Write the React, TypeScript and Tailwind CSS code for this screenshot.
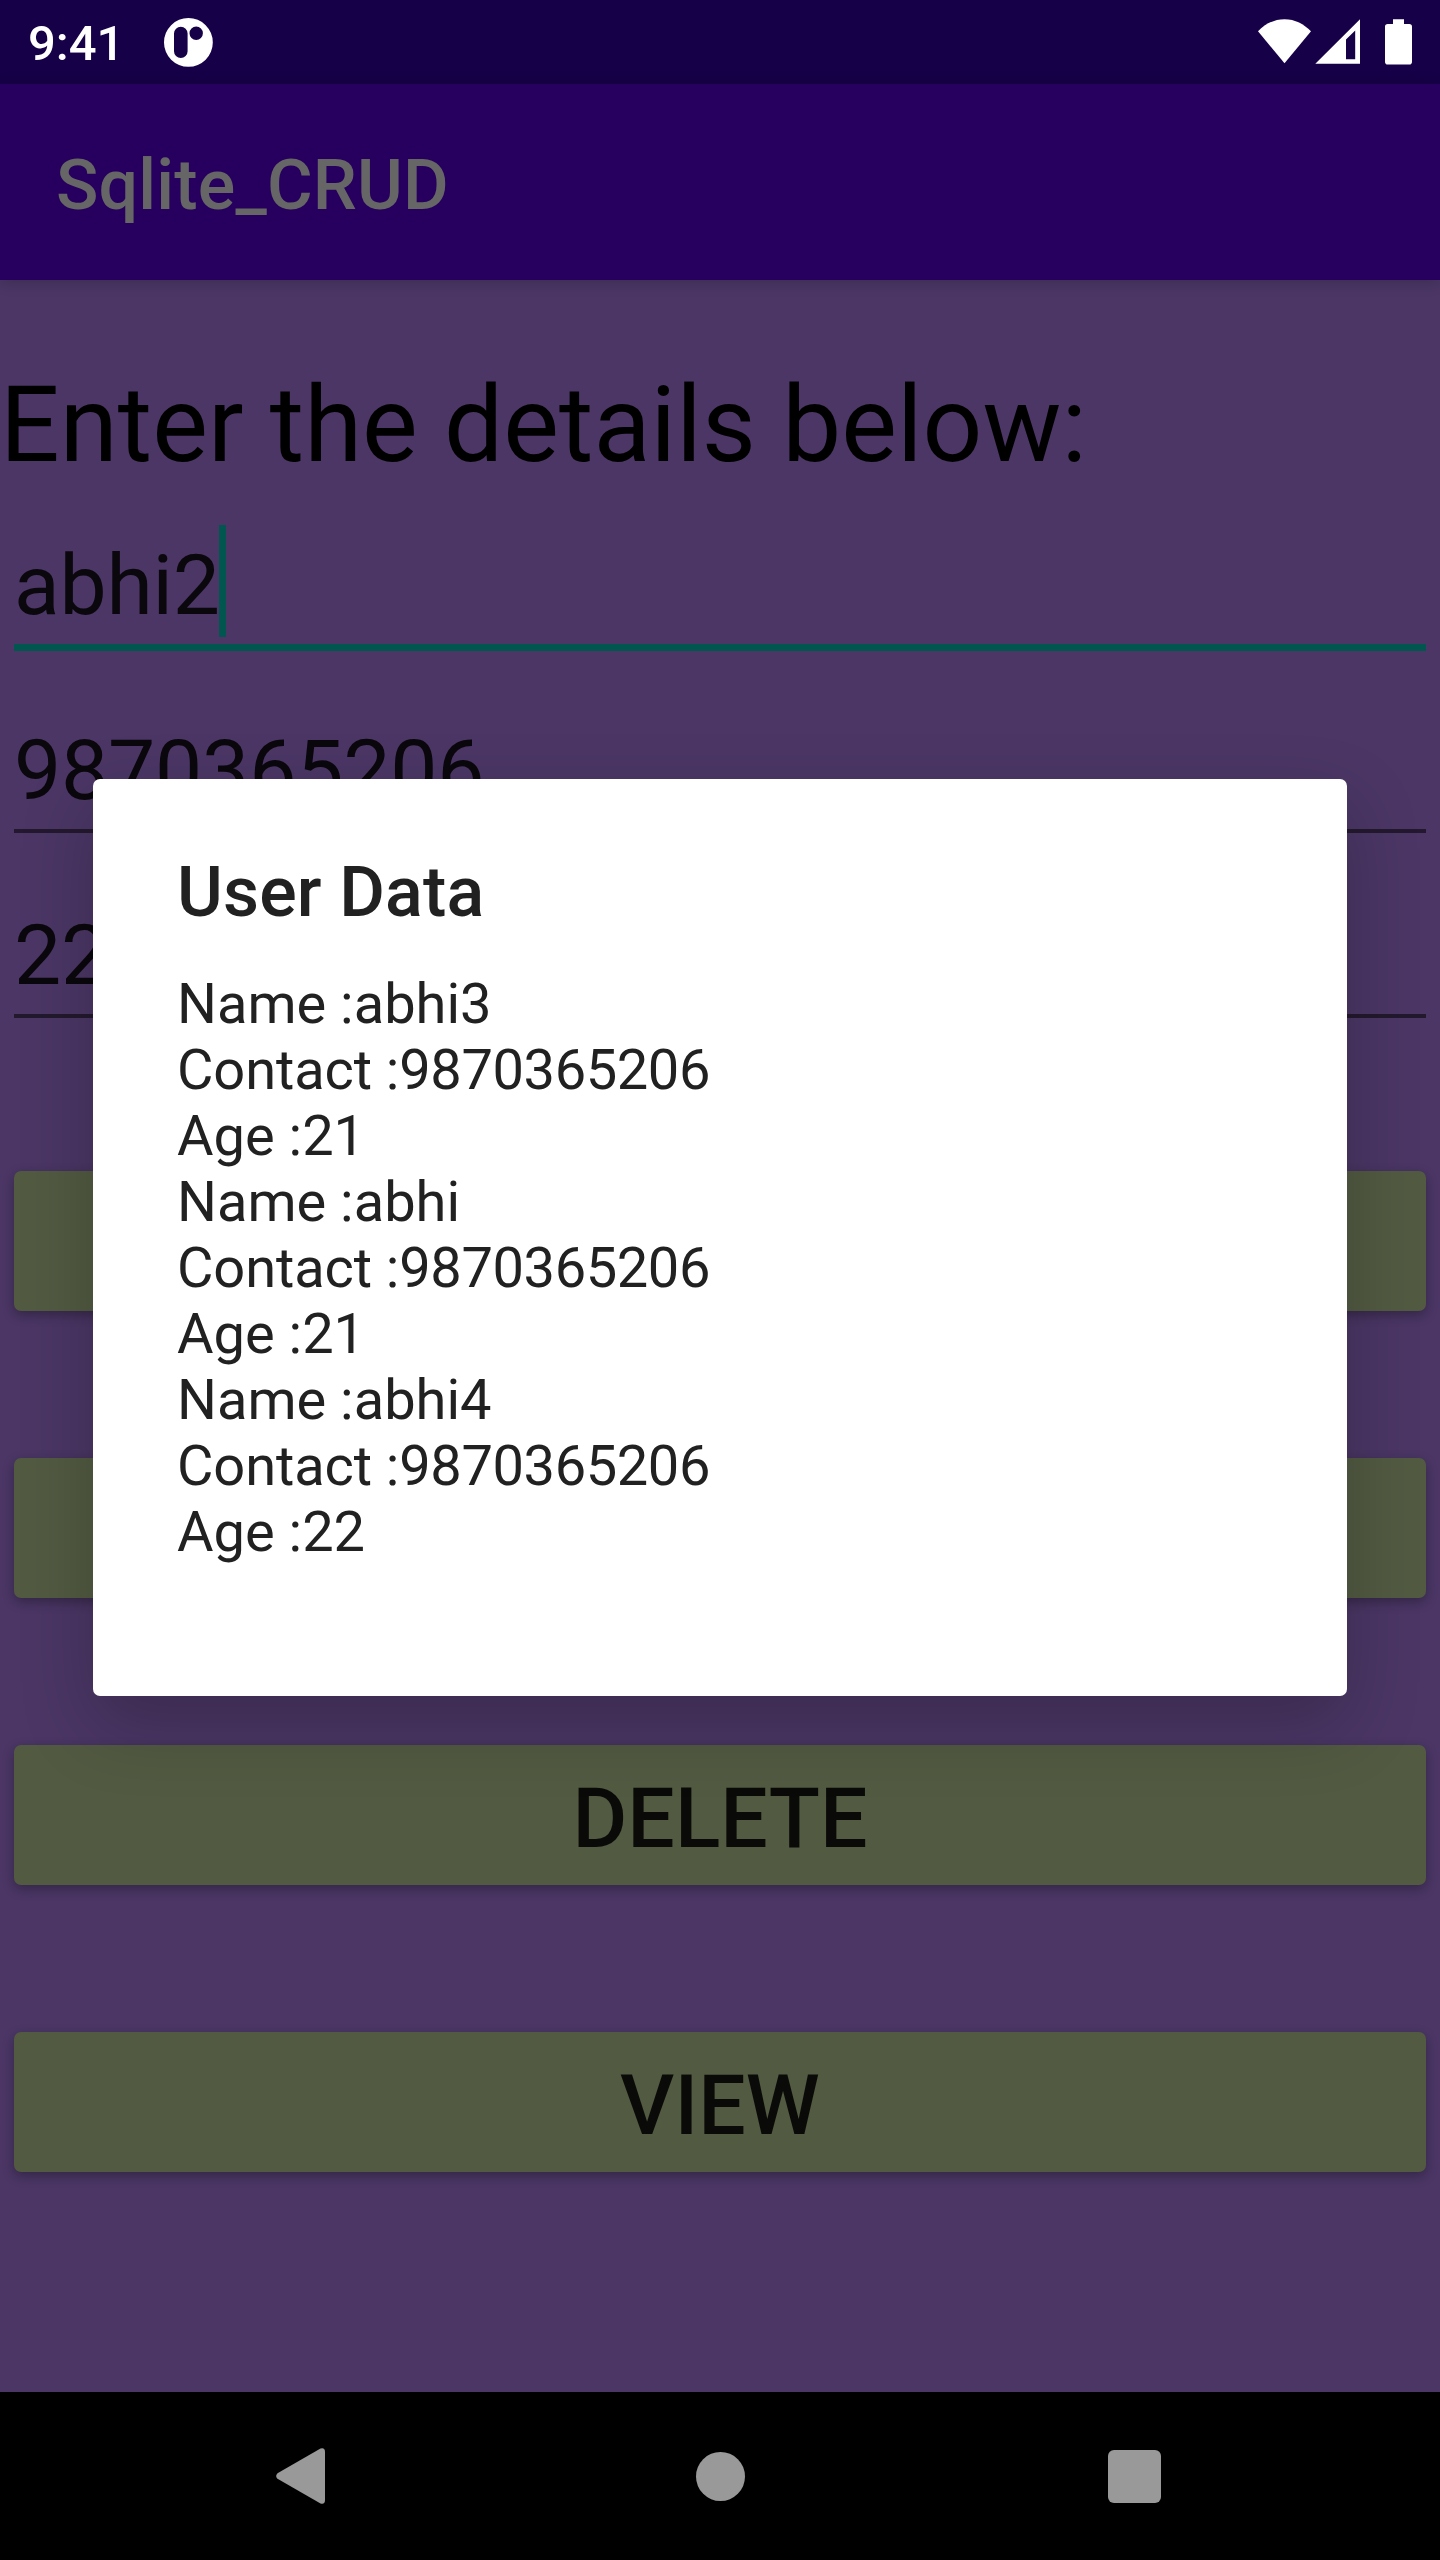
import React from "react";

const fields = [
  { value: "abhi2", focused: true },
  { value: "9870365206", focused: false },
  { value: "22", focused: false },
];

const buttons = ["", "", "DELETE", "VIEW"];

const records = [
  { name: "abhi3", contact: "9870365206", age: 21 },
  { name: "abhi", contact: "9870365206", age: 21 },
  { name: "abhi4", contact: "9870365206", age: 22 },
];

function StatusBar() {
  return (
    <header className="flex h-[84px] shrink-0 items-center bg-[#160048] text-white">
      <span className="ml-[28px] h-[84px] w-[136px] pt-[2px] text-[49px] leading-[84px] font-medium">9:41</span>
      <svg className="h-[84px] w-[50px]" viewBox="164 0 50 84" fill="currentColor">
        <path
          fillRule="evenodd"
          d="M188.4 18a24.4 24.4 0 1 1 0 48.8a24.4 24.4 0 1 1 0-48.8ZM180.8 26.8a6.8 6.8 0 0 0-6.8 6.8v17.6a6.8 6.8 0 0 0 13.6 0v-17.6a6.8 6.8 0 0 0-6.8-6.8ZM196.2 26.6a6.7 6.7 0 1 0 0 13.4a6.7 6.7 0 1 0 0-13.4Z"
        />
      </svg>
      <svg className="mr-[28px] ml-auto h-[84px] w-[160px]" viewBox="1252 0 160 84" fill="currentColor">
        <path d="M1258 31.3C1265 24 1274 19.2 1284.5 19.2S1304 24 1311 31.3L1284.5 63.3Z" />
        <path fillRule="evenodd" d="M1315.3 63.7L1360 19.3V63.7ZM1346 39.6V59.3H1355.2V30.6Z" />
        <path d="M1393 19.3h11v4.7h5.200a2.800 2.800 0 0 1 2.800 2.800v35a2.800 2.800 0 0 1-2.800 2.800h-21.400a2.800 2.800 0 0 1-2.800-2.800v-35a2.800 2.800 0 0 1 2.800-2.800h5.200Z" />
      </svg>
    </header>
  );
}

function NavBar() {
  return (
    <nav className="flex h-[168px] shrink-0 items-center justify-between bg-black pr-[279px] pl-[276px] text-[#999999]">
      <svg className="h-[56px] w-[49px]" viewBox="0 0 49 56" fill="currentColor">
        <path d="M1.500 25.200L44.500 0.500Q49 -0.800 49 4V52Q49 56.800 44.500 55.500L1.500 30.800Q-1.200 28 1.500 25.200Z" />
      </svg>
      <span className="ml-[7px] size-[49px] rounded-full bg-[#999999]" />
      <span className="size-[53px] rounded-[6px] bg-[#999999]" />
    </nav>
  );
}

export default function App() {
  return (
    <div className="relative flex h-[2560px] w-[1440px] flex-col overflow-hidden bg-[#4b3665] font-['Roboto',sans-serif]">
      <StatusBar />
      <div className="flex h-[196px] shrink-0 items-center bg-[#27005f] pt-[6px] pl-[56px] shadow-[0_2px_14px_rgba(0,0,0,0.2)]">
        <h1 className="text-[70px] leading-[82px] font-medium tracking-[0.15px] text-[#666666]">Sqlite_CRUD</h1>
      </div>

      <main className="flex grow flex-col pt-[84px]">
        <p className="h-[123px] text-[105px] leading-[123px] tracking-[0.07px] text-black">Enter the details below:</p>
        {fields.map((f) => (
          <div key={f.value} className="h-[185px] px-[14px] pt-[43px]">
            <div className="relative w-fit text-[84px] leading-[112px] tracking-[-0.18px] text-[#0a070d]">
              {f.value}
              {f.focused && <span className="absolute -top-[5px] left-[205px] h-[112px] w-[7px] bg-[#01574f]" />}
            </div>
            <div className={f.focused ? "mt-[2px] h-[7px] bg-[#01574f]" : "mt-[2px] h-[3.5px] bg-[#23192e]"} />
          </div>
        ))}
        <div className="mt-[129px] flex flex-col gap-[147px] px-[14px]">
          {buttons.map((label, i) => (
            <button
              key={i}
              className="h-[140px] w-full rounded-[7px] bg-[#525a42] pt-[6px] text-[84px] leading-[134px] font-medium tracking-[0.1px] text-[#0a0b08] shadow-[0_4px_12px_rgba(0,0,0,0.3)]"
            >
              <span className="block pt-[1px]">{label}</span>
            </button>
          ))}
        </div>
      </main>

      <NavBar />

      <section
        role="dialog"
        className="absolute top-[779px] left-[93px] h-[917px] w-[1254px] rounded-[7px] bg-white px-[84px] pt-[72px] text-[#212121] shadow-[0_28px_72px_rgba(0,0,0,0.22)]"
      >
        <h2 className="text-[70px] leading-[82px] font-medium tracking-[0.15px]">User Data</h2>
        <div className="mt-[38px] text-[56px] leading-[66px]">
          {records.map((r) => (
            <div key={r.name}>
              <p>Name :{r.name}</p>
              <p className="tracking-[-0.1px]">
                Contact :<span className="tracking-[-0.4px]">{r.contact}</span>
              </p>
              <p>Age :{r.age}</p>
            </div>
          ))}
        </div>
      </section>
    </div>
  );
}
